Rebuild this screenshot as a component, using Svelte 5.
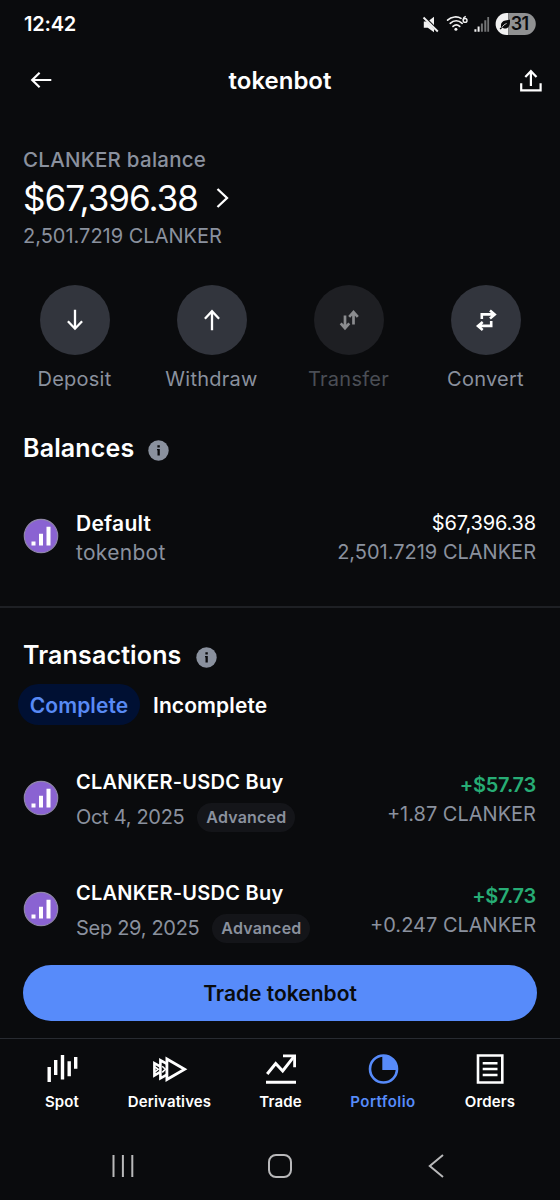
<script lang="ts">
	interface Transaction {
		title: string;
		date: string;
		value: string;
		amount: string;
	}

	const actions = [
		{ label: 'Deposit', icon: 'down', disabled: false },
		{ label: 'Withdraw', icon: 'up', disabled: false },
		{ label: 'Transfer', icon: 'transfer', disabled: true },
		{ label: 'Convert', icon: 'convert', disabled: false }
	];

	const transactions: Transaction[] = [
		{ title: 'CLANKER-USDC Buy', date: 'Oct 4, 2025', value: '+$57.73', amount: '+1.87 CLANKER' },
		{ title: 'CLANKER-USDC Buy', date: 'Sep 29, 2025', value: '+$7.73', amount: '+0.247 CLANKER' }
	];

	const navItems = ['Spot', 'Derivatives', 'Trade', 'Portfolio', 'Orders'];

	let tab = $state('Complete');
	let activeNav = $state('Portfolio');
</script>

{#snippet tokenIcon()}
	<svg class="token" width="36" height="36" viewBox="0 0 36 36">
		<circle cx="18" cy="18" r="16.7" fill="#8a63d2" stroke="#8f86a8" stroke-width="1.2" />
		<path d="M8.5 23.5h4v4h-4zM16 15.8h4v11.7h-4zM23.5 8.7h4v18.8h-4z" fill="#fff" />
	</svg>
{/snippet}

{#snippet infoIcon()}
	<svg class="info" width="21" height="21" viewBox="0 0 21 21">
		<circle cx="10.5" cy="10.5" r="10.2" fill="#8a919e" />
		<path d="M9.4 5.2h2.4v2.3H9.4zM9 9h2.8v6.6H9.5v-5.3H9z" fill="#0a0b0d" />
	</svg>
{/snippet}

<div class="screen">
	<div class="status-bar">
		<span class="clock">12:42</span>
		<svg class="status-icons" width="114" height="24" viewBox="0 0 114 24">
			<g fill="#f1f1f1">
				<path d="M1.8 9.5h4L12 4.8v15.5l-6.2-4.6h-4z" />
				<path d="M1.5 4.2l14.3 14.6" stroke="#0a0b0d" stroke-width="2.6" />
				<path d="M1.5 5.5l14.3 14" stroke="#f1f1f1" stroke-width="1.9" />
			</g>
			<g fill="none" stroke="#f1f1f1" stroke-width="1.7" stroke-linecap="round">
				<path d="M25.6 8.2C29.5 4.4 35.5 4.1 39 6.4" />
				<path d="M28.2 11.3c3.6-3.3 8.4-3.3 12 0" />
				<path d="M31 14.4c2.1-1.9 4.6-1.9 6.7 0" />
			</g>
			<circle cx="33.9" cy="17.3" r="1.5" fill="#f1f1f1" />
			<path d="M43.8 4.4c-1.6.5-2.6 1.8-2.6 3.8" fill="none" stroke="#f1f1f1" stroke-width="1.4" />
			<circle cx="43.1" cy="8.4" r="1.9" fill="none" stroke="#f1f1f1" stroke-width="1.4" />
			<path d="M52.4 17.2h2v2.6h-2zM55.6 14.4h2v5.4h-2z" fill="#f1f1f1" />
			<path d="M58.9 11.6h2v8.2h-2zM62.3 8.2h2v11.6h-2zM65.3 4.9h1.8v14.9h-1.8z" fill="#737475" />
			<path d="M86.4 1H84.6a11 11 0 0 0 0 22h1.8z" fill="#f1f1f1" />
			<path d="M86.4 1h16.4a11 11 0 0 1 0 22H86.4z" fill="#909192" />
			<path d="M79.2 15.2c-1-3.5.8-6.3 4.2-6.8 2-.3 3.3-.2 4.5-.9.6 4.8-.8 9-4.8 9.1-1.3 0-2-.3-2.6-.8l-2 1.6-.9-.9z" fill="#0a0b0d" />
			<path d="M79.8 15.6c1.4-2.2 2.8-3.3 4.8-4.1" fill="none" stroke="#f1f1f1" stroke-width=".8" />
			<text x="88.8" y="18.2" class="battery-text">31</text>
		</svg>
	</div>

	<header class="header">
		<svg width="24" height="24" viewBox="0 0 24 24" fill="none" stroke="#fff" stroke-width="2.2">
			<path d="M22.3 12H3M10.6 4.8 3.2 12l7.4 7.2" />
		</svg>
		<h1>tokenbot</h1>
		<svg width="24" height="24" viewBox="0 0 24 24" fill="none" stroke="#fff" stroke-width="2.2">
			<path d="M2.2 15.2v7.1h19.4v-7.1M11.9 18V3.4M6.3 9l5.6-5.8L17.5 9" />
		</svg>
	</header>

	<section class="balance">
		<div class="balance-label">CLANKER balance</div>
		<div class="balance-value">
			<span>$67,396.38</span>
			<svg width="14" height="22" viewBox="0 0 14 22" fill="none" stroke="#fff" stroke-width="2.3">
				<path d="M1.5 2l9.5 9-9.5 9" />
			</svg>
		</div>
		<div class="balance-amount">2,501.7219 CLANKER</div>
	</section>

	<div class="actions">
		{#each actions as action (action.label)}
			<button class="action" disabled={action.disabled}>
				<span class="action-circle">
					<svg width="24" height="24" viewBox="0 0 24 24" fill="none" stroke="currentColor" stroke-width="2.3">
						{#if action.icon === 'down'}
							<path d="M12 1.8v19M4.9 13.3l7.1 7.4 7.1-7.4" />
						{:else if action.icon === 'up'}
							<path d="M12 22.3V3M4.9 10.7 12 3.2l7.1 7.5" />
						{:else if action.icon === 'transfer'}
							<path stroke-width="2.7" d="M8 7.5v13M3.7 15.4l4.3 4.8 4.3-4.8M16.5 16.5V4.2M12.2 8.8l4.3-4.8 4.3 4.8" />
						{:else}
							<path stroke-width="2.6" d="M7.8 11V6.4h13M16 2.4l4.7 4-4.7 4M17.2 13v4.9h-13M8.7 13.9 4 17.9l4.7 4" />
						{/if}
					</svg>
				</span>
				<span class="action-label">{action.label}</span>
			</button>
		{/each}
	</div>

	<section class="balances">
		<h2>Balances {@render infoIcon()}</h2>
		<div class="row">
			{@render tokenIcon()}
			<div class="row-main wide">
				<div class="row-title">Default</div>
				<div class="row-sub">tokenbot</div>
			</div>
			<div class="row-end">
				<div class="row-value">$67,396.38</div>
				<div class="row-amount">2,501.7219 CLANKER</div>
			</div>
		</div>
	</section>

	<section class="transactions">
		<h2>Transactions {@render infoIcon()}</h2>
		<div class="tabs">
			{#each ['Complete', 'Incomplete'] as name (name)}
				<button class="tab" class:active={tab === name} onclick={() => (tab = name)}>{name}</button>
			{/each}
		</div>
		{#each transactions as tx (tx.date)}
			<div class="row tx">
				{@render tokenIcon()}
				<div class="row-main">
					<div class="row-title">{tx.title}</div>
					<div class="tx-meta">
						<span class="tx-date">{tx.date}</span>
						<span class="badge">Advanced</span>
					</div>
				</div>
				<div class="row-end">
					<div class="row-value positive">{tx.value}</div>
					<div class="row-amount">{tx.amount}</div>
				</div>
			</div>
		{/each}
	</section>

	<div class="cta">
		<button class="trade-button">Trade tokenbot</button>
	</div>

	<nav class="nav">
		{#each navItems as item (item)}
			<button class="nav-item" class:active={activeNav === item} onclick={() => (activeNav = item)}>
				<svg width="36" height="32" viewBox="0 0 36 32" fill="none" stroke="currentColor" stroke-width="2.6">
					{#if item === 'Spot'}
						<path stroke-width="3.4" d="M5.2 14v15M11.7 7v15M18.5 2v24.5M25.2 8.3v15M31.7 4v11.8" />
					{:else if item === 'Derivatives'}
						<path stroke-width="2.8" d="M14.9 6v20.5l17.7-10.2z" />
						<path stroke-width="2.6" d="M14.5 10.6 8.4 7.3v18l6.1-3.4M8 13.4l-5.6-3.2v12.2L8 19.2" />
						<path stroke-width="1.6" d="M3 13.8l3.2 2.5L3 18.8M10.2 13.2l3.2 3.1-3.2 3.1" />
					{:else if item === 'Trade'}
						<path stroke-width="3" d="M3 29.2h30M4.2 21l8.5-10.5 7 7.5L30.5 4.2" />
						<path stroke-width="2.8" d="M20 2.8h11.6v11.5" />
					{:else if item === 'Portfolio'}
						<circle cx="18.5" cy="16" r="13.5" />
						<path d="M17.3 2.7V17H32A13.5 13.5 0 0 0 17.3 2.7z" fill="currentColor" stroke="none" />
					{:else}
						<path d="M6 2.5h24.3v27H6z" />
						<path d="M10.7 10.2h14.8M10.7 16h14.8M10.7 22h14.8" />
					{/if}
				</svg>
				<span>{item}</span>
			</button>
		{/each}
	</nav>

	<div class="system-nav">
		<svg width="24" height="24" viewBox="0 0 24 24" stroke="#b9b9ba" stroke-width="2">
			<path d="M2.5 1v22M11.9 1v22M21.3 1v22" />
		</svg>
		<svg width="24" height="24" viewBox="0 0 24 24" fill="none" stroke="#b9b9ba" stroke-width="2">
			<rect x="1" y="1" width="22" height="22" rx="7" />
		</svg>
		<svg width="24" height="24" viewBox="0 0 24 24" fill="none" stroke="#b9b9ba" stroke-width="2">
			<path d="M19 1 5.8 12 19 23" />
		</svg>
	</div>
</div>

<style>
	:global(body) {
		background: #0a0b0d;
	}

	.screen {
		display: flex;
		flex-direction: column;
		width: 560px;
		height: 1200px;
		overflow: hidden;
		background: #0a0b0d;
		color: #fff;
		font-family: Inter, 'Liberation Sans', sans-serif;
		white-space: nowrap;
	}

	button {
		padding: 0;
		border: 0;
		background: none;
		color: inherit;
		font: inherit;
	}

	svg {
		flex: none;
	}

	.status-bar {
		display: flex;
		justify-content: space-between;
		align-items: center;
		height: 48px;
		padding: 0 24px;
	}

	.clock {
		font-size: 20px;
		font-weight: 600;
		letter-spacing: -0.2px;
	}

	.battery-text {
		font-size: 18px;
		font-weight: 600;
		letter-spacing: -0.8px;
		fill: #0a0b0d;
	}

	.header {
		display: grid;
		grid-template-columns: 24px 1fr 24px;
		align-items: center;
		height: 64px;
		padding: 0 17px 0 29px;
	}

	h1 {
		margin: 0 12px 0 0;
		font-size: 24px;
		font-weight: 600;
		text-align: center;
	}

	.balance {
		padding: 36px 23px 0;
	}

	.balance-label {
		height: 24px;
		line-height: 24px;
		color: #8a919e;
		font-size: 20.5px;
		font-weight: 500;
		letter-spacing: 0.25px;
	}

	.balance-value {
		display: flex;
		align-items: center;
		gap: 18px;
		height: 52px;
		font-size: 35px;
		letter-spacing: -1px;
	}

	.balance-amount {
		height: 24px;
		line-height: 24px;
		color: #8a919e;
		font-size: 20px;
	}

	.actions {
		display: grid;
		grid-template-columns: repeat(4, 137px);
		padding: 37px 0 0 6px;
	}

	.action {
		display: flex;
		flex-direction: column;
		align-items: center;
		gap: 12px;
	}

	.action-circle {
		display: flex;
		align-items: center;
		justify-content: center;
		width: 70px;
		height: 70px;
		border-radius: 50%;
		background: #32353d;
	}

	.action-label {
		line-height: 24px;
		color: #8a919e;
		font-size: 20px;
		letter-spacing: 0.25px;
	}

	.action:disabled .action-circle {
		background: #1e1f23;
		color: #8b8c8f;
	}

	.action:disabled .action-label {
		color: #4a4e55;
	}

	h2 {
		display: flex;
		align-items: center;
		gap: 14px;
		height: 32px;
		margin: 0;
		font-size: 25px;
		font-weight: 600;
		letter-spacing: 0.15px;
	}

	.info {
		position: relative;
		top: 2px;
	}

	.balances {
		height: 174px;
		padding: 41px 24px 0 23px;
		border-bottom: 2px solid #1e2024;
	}

	.row {
		display: flex;
		align-items: center;
		height: 59px;
		font-size: 20px;
		line-height: 29px;
	}

	.balances .row {
		margin-top: 44px;
	}

	.balances .token {
		margin-bottom: 3px;
	}

	.row-main {
		flex: 1;
		margin-left: 17px;
	}

	.row-title {
		font-weight: 600;
		letter-spacing: 0.25px;
	}

	.row-sub,
	.row-amount {
		color: #8a919e;
	}

	.row-main.wide {
		font-size: 21px;
		letter-spacing: 0.3px;
	}

	.row-end {
		text-align: right;
	}

	.row-value {
		letter-spacing: -0.15px;
	}

	.transactions {
		padding: 31px 24px 0 23px;
	}

	.tabs {
		display: flex;
		gap: 13px;
		margin: 13px 0 17px -5px;
	}

	.tab {
		height: 41px;
		padding-top: 2px;
		border-radius: 21px;
		font-size: 21px;
		font-weight: 600;
		letter-spacing: 0.1px;
	}

	.tab.active {
		width: 122px;
		background: #001033;
		color: #588af5;
	}

	.row.tx {
		height: 111.5px;
	}

	.tx .row-main,
	.tx .row-end {
		padding-top: 4px;
	}

	.tx-meta {
		display: flex;
		align-items: center;
		gap: 13px;
		margin-top: 6px;
	}

	.tx-date {
		color: #8a919e;
		letter-spacing: -0.3px;
	}

	.badge {
		width: 98px;
		border-radius: 15px;
		background: #141519;
		color: #8a919e;
		font-size: 16px;
		font-weight: 600;
		letter-spacing: 0.2px;
		text-align: center;
	}

	.positive {
		color: #27ad75;
		font-weight: 600;
		letter-spacing: -0.25px;
	}

	.cta {
		display: flex;
		margin-top: auto;
		padding: 0 23px;
	}

	.trade-button {
		flex: 1;
		height: 56px;
		border-radius: 28px;
		background: #578bfa;
		color: #0a0b0d;
		font-size: 21px;
		font-weight: 600;
	}

	.nav {
		display: grid;
		grid-template-columns: 35px 83px 42px 66px 51px;
		justify-content: center;
		column-gap: 48.5px;
		height: 79px;
		margin-top: 17px;
		padding-top: 14px;
		border-top: 1px solid #282b31;
		box-sizing: border-box;
	}

	.nav-item {
		display: flex;
		flex-direction: column;
		align-items: center;
		gap: 7px;
		height: 59px;
		font-size: 15px;
		font-weight: 600;
		line-height: 20px;
		letter-spacing: 0.15px;
	}

	.nav-item.active {
		color: #578bfa;
		letter-spacing: 0.45px;
	}

	.system-nav {
		display: flex;
		align-items: center;
		justify-content: space-between;
		height: 83px;
		padding: 15px 112px 0 111px;
		box-sizing: border-box;
	}
</style>
